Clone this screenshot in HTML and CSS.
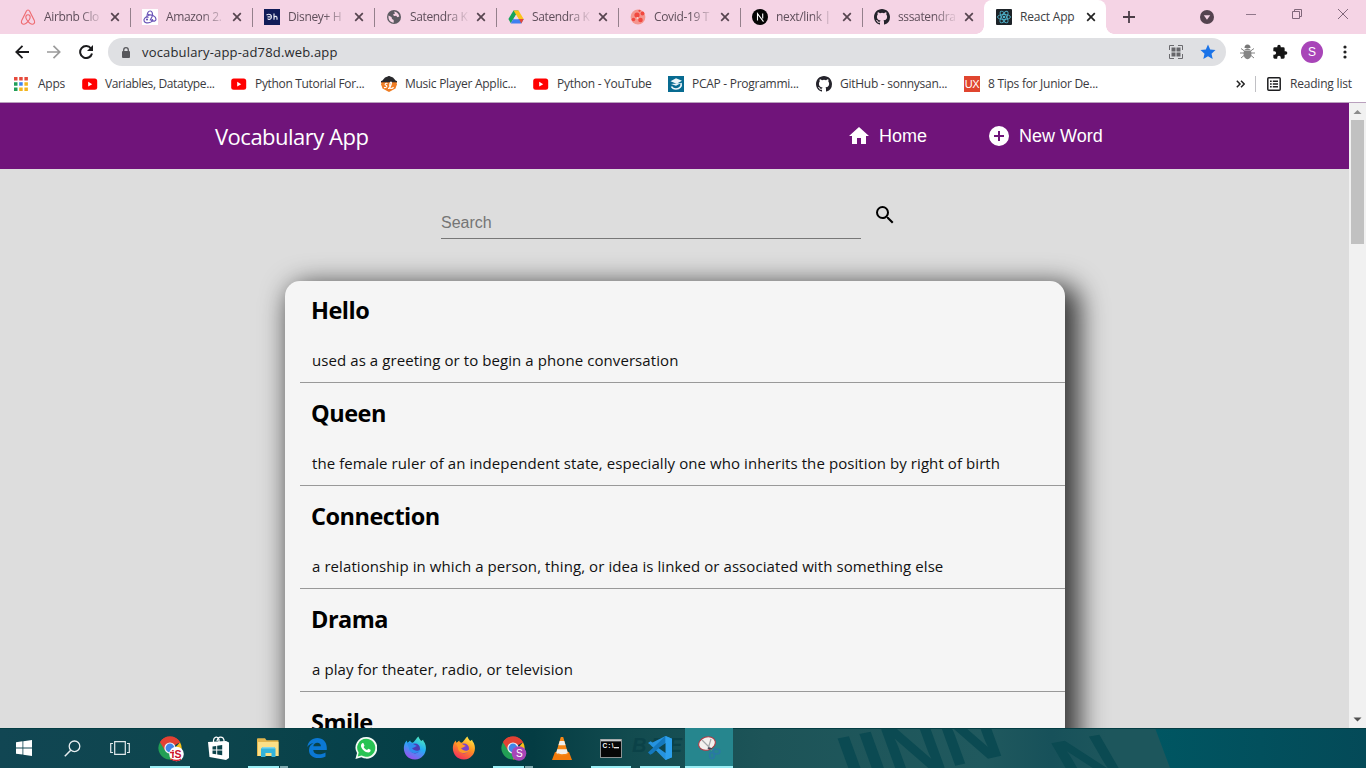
FILE: index.html
```html
<!DOCTYPE html>
<html lang="en">
<head>
<meta charset="utf-8">
<title>React App</title>
<link rel="stylesheet" href="styles.css">
</head>
<body>
<svg class="defs" width="0" height="0">
  <defs>
    <symbol id="x" viewBox="0 0 10 10"><path d="M1.2 1.2l7.6 7.6M8.8 1.2L1.2 8.8" stroke="currentColor" stroke-width="1.7" fill="none"/></symbol>
    <symbol id="github" viewBox="0 0 16 16"><path fill="#24232b" fill-rule="evenodd" d="M8 0C3.58 0 0 3.58 0 8c0 3.54 2.29 6.53 5.47 7.59.4.07.55-.17.55-.38 0-.19-.01-.82-.01-1.49-2.01.37-2.53-.49-2.69-.94-.09-.23-.48-.94-.82-1.13-.28-.15-.68-.52-.01-.53.63-.01 1.08.58 1.23.82.72 1.21 1.87.87 2.33.66.07-.52.28-.87.51-1.07-1.78-.2-3.64-.89-3.64-3.95 0-.87.31-1.59.82-2.15-.08-.2-.36-1.02.08-2.12 0 0 .67-.21 2.2.82a7.6 7.6 0 014 0c1.53-1.04 2.2-.82 2.2-.82.44 1.1.16 1.92.08 2.12.51.56.82 1.27.82 2.15 0 3.07-1.87 3.75-3.65 3.95.29.25.54.73.54 1.48 0 1.07-.01 1.93-.01 2.2 0 .21.15.46.55.38A8.01 8.01 0 0016 8c0-4.42-3.58-8-8-8z"/></symbol>
    <symbol id="youtube" viewBox="0 0 16 16"><rect x=".2" y="2.500" width="15" height="11.300" rx="2.500" fill="#f00"/><path d="M6.200 5.800v4.700l4-2.350z" fill="#fff"/></symbol>
    <symbol id="chrome" viewBox="0 0 24 24"><path d="M12 12L2 6.2A11.5 11.5 0 0 1 22 6.2z" fill="#e34133"/><path d="M2 6.2A11.5 11.5 0 0 0 12 23.5l5-8.7L12 12z" fill="#229f55"/><path d="M22 6.2A11.5 11.5 0 0 1 12 23.5L17 12z" fill="#fbc116"/><path d="M12 6.8h10.3l-.3-.6A11.5 11.5 0 0 0 2 6.2l5.2 8.6z" fill="#e34133"/><circle cx="12" cy="12" r="5.6" fill="#f1f3f4"/><circle cx="12" cy="12" r="4.4" fill="#4285e8"/></symbol>
    <linearGradient id="ffa" x1=".8" y1="0" x2=".3" y2="1"><stop offset="0" stop-color="#fff04a"/><stop offset=".45" stop-color="#ff9720"/><stop offset="1" stop-color="#f42d5e"/></linearGradient>
    <linearGradient id="ffb" x1=".8" y1="0" x2=".3" y2="1"><stop offset="0" stop-color="#54efb9"/><stop offset=".45" stop-color="#22aef4"/><stop offset="1" stop-color="#9c4df0"/></linearGradient>
    <symbol id="fox" viewBox="0 0 24 24"><path d="M15.500.5c.2 2 2 3 2.600 4.400l2-1.200c.2 1.500 1 2 1.800 3.500C25 14 21 23.500 12 23.500S-.8 14.500 1.500 8C2 6.600 3 5.500 3.800 4.500L4.400 7l2.800-2.500c.2 1.200.8 1.800 2 2.200 2.500-.2 3.600-4.500 6.300-6.200z"/></symbol>
  </defs>
</svg>

<header class="tabstrip">
  <div class="tab"><svg class="fav" viewBox="0 0 16 16" fill="none" stroke="#ee6a70" stroke-width="1.1"><path d="M8 1C6.900 1 6.600 1.700 6.100 2.700L1.700 11.400C.6 14 2.300 15.300 4 15.200c2.200-.2 6.200-4.500 6.200-7C10.200 6.700 9.300 5.800 8 5.800s-2.200.9-2.200 2.400c0 2.500 4 6.800 6.200 7 1.700.1 3.400-1.200 2.300-3.800L9.900 2.700C9.400 1.700 9.100 1 8 1z"/></svg><span class="t">Airbnb Clo</span><svg class="x"><use href="#x"/></svg></div>
  <div class="tab"><svg class="fav" viewBox="0 0 16 16"><rect width="16" height="16" fill="#fff"/><g fill="none" stroke="#6b55b8" stroke-width="1.2"><path d="M4.800 8.500C5 4.500 6.500 2 8.200 2c2 0 3 3 1.800 5.800L8 11.500"/><path d="M6.500 6c3-.8 7.500 1.200 7.500 4.200 0 2-2.500 2.600-4.500 1.300"/><path d="M11 11c-1 2-4 3.200-6.500 2.800C2 13.400 1.200 11 2.800 9.200 4 8 5.500 7.700 6.500 8.500"/></g><g fill="#6b55b8"><circle cx="6.500" cy="5.900" r="1.100"/><circle cx="5" cy="10.500" r="1.100"/><circle cx="10.200" cy="11.200" r="1.100"/></g></svg><span class="t">Amazon 2.</span><svg class="x"><use href="#x"/></svg></div>
  <div class="tab"><svg class="fav" viewBox="0 0 16 16"><rect width="16" height="16" fill="#101c58"/><path d="M2.500 6C6 4 8 6.500 7.300 8.800 6.800 10.500 4 11 3.800 9.500M3.500 7.800h3M10 4.500v6.200M10 8.200c1.500-1.500 3-1 3 .8v1.700" fill="none" stroke="#e7e9f2" stroke-width="1.200"/></svg><span class="t">Disney+ H</span><svg class="x"><use href="#x"/></svg></div>
  <div class="tab"><svg class="fav" viewBox="0 0 16 16"><circle cx="8" cy="8" r="7" fill="#5d5b62"/><path d="M2.500 6.500l3 1.500.5 2 1.700 1v2.700C4.500 13.500 2 11 2.500 6.500zM8 2.500c3 .2 5 2.500 5.300 5l-2 .8-1-1.500-2.300.2-1-1.500 2-1z" fill="#f5d4e5"/></svg><span class="t">Satendra K</span><svg class="x"><use href="#x"/></svg></div>
  <div class="tab"><svg class="fav" viewBox="0 0 16 16"><path d="M5.500 1.500h5l-7.700 12.700L.4 10.100z" fill="#17a45a"/><path d="M5.500 1.500h5l5.200 8.600h-5z" fill="#fbc31a"/><path d="M15.700 10.100l-2.400 4.300H2.700l2.600-4.300z" fill="#3f7ff0"/><path d="M8 6l2.500 4.200h-5z" fill="#f5d4e5"/><path d="M11 10.100h4.700l-2.400 4.300z" fill="#e5473a"/></svg><span class="t">Satendra K</span><svg class="x"><use href="#x"/></svg></div>
  <div class="tab"><svg class="fav" viewBox="0 0 16 16"><circle cx="8" cy="8" r="7.400" fill="#f4968f"/><g fill="#f1483f"><circle cx="7" cy="6" r="2.600"/><circle cx="12.500" cy="4.500" r="1.900"/><circle cx="10.500" cy="11" r="2.300"/><circle cx="3.500" cy="10.500" r="1.800"/><circle cx="9.500" cy="1.800" r="1.100"/></g><circle cx="7.500" cy="9" r="1" fill="#fbd0ca"/></svg><span class="t">Covid-19 T</span><svg class="x"><use href="#x"/></svg></div>
  <div class="tab"><svg class="fav" viewBox="0 0 16 16"><circle cx="8" cy="8" r="8" fill="#050505"/><path d="M5.500 11.500V4.700l6 8M10.700 4.500v5" stroke="#fff" stroke-width="1.100" fill="none"/></svg><span class="t">next/link | </span><svg class="x"><use href="#x"/></svg></div>
  <div class="tab last"><svg class="fav"><use href="#github"/></svg><span class="t">sssatendra</span><svg class="x"><use href="#x"/></svg></div>
  <div class="tab active"><svg class="fav" viewBox="0 0 16 16"><rect width="16" height="16" rx="1" fill="#1d2328"/><g fill="none" stroke="#4fb3cc" stroke-width=".9"><ellipse cx="8" cy="8" rx="6.500" ry="2.500"/><ellipse cx="8" cy="8" rx="6.500" ry="2.500" transform="rotate(60 8 8)"/><ellipse cx="8" cy="8" rx="6.500" ry="2.500" transform="rotate(120 8 8)"/></g><circle cx="8" cy="8" r="1.300" fill="#4fb3cc"/></svg><span class="t full">React App</span><svg class="x"><use href="#x"/></svg></div>
  <svg class="plus" viewBox="0 0 12 12"><path d="M6 0v12M0 6h12" stroke="#4b3d47" stroke-width="1.800"/></svg>
  <div class="winctl">
    <svg width="14" height="14" viewBox="0 0 14 14"><circle cx="7" cy="7" r="7" fill="#54434f"/><path d="M3.800 5.200h6.400L7 9.800z" fill="#f5d4e5"/></svg>
    <svg class="min" width="10" height="10" viewBox="0 0 10 10"><path d="M0 5.500h10" stroke="#90778a"/></svg>
    <svg class="max" width="10" height="10" viewBox="0 0 10 10"><path d="M.5 2.500h7v7h-7zM2.500 2.500v-2h7v7h-2" stroke="#80677a" fill="none"/></svg>
    <svg class="cls" width="10" height="10" viewBox="0 0 10 10"><path d="M0 0l10 10M10 0L0 10" stroke="#80677a"/></svg>
  </div>
</header>

<div class="toolbar">
  <div class="nav">
    <svg width="14" height="14" viewBox="0 0 14 14"><path d="M14 7H1.500M7.500.8L1.300 7l6.200 6.200" fill="none" stroke="#1b1b1d" stroke-width="1.800"/></svg>
    <svg width="14" height="14" viewBox="0 0 14 14"><path d="M0 7h12.500M6.500.8L12.700 7l-6.200 6.200" fill="none" stroke="#9b9b9b" stroke-width="1.700"/></svg>
    <svg width="14" height="14" viewBox="0 0 14 14"><path d="M12 3.500A6 6 0 1 0 13 8.500" fill="none" stroke="#1b1b1d" stroke-width="2"/><path d="M14 0v6H8z" fill="#1b1b1d"/></svg>
  </div>
  <div class="omni">
    <svg width="8" height="11" viewBox="0 0 8 11"><rect y="4" width="8" height="7" rx="1" fill="#58585c"/><path d="M1.700 4.500V3a2.300 2.300 0 0 1 4.600 0v1.500" fill="none" stroke="#58585c" stroke-width="1.300"/></svg>
    <span class="url">vocabulary-app-ad78d.web.app</span>
    <svg class="qr" width="14" height="14" viewBox="0 0 14 14"><path d="M.5 5V.5H5M9 .5h4.500V5M13.500 9v4.500H9M5 13.500H.5V9" fill="none" stroke="#6a6a6e"/><path d="M2.500 2.500h4v4h-4zM7.500 2.500h4v4h-4zM2.500 7.500h4v4h-4zM7.500 7.500h4v4h-4z" fill="#66666a"/></svg>
    <svg width="16" height="16" viewBox="0 0 16 16"><path d="M8 .6l2.200 5 5.300.5-4 3.600 1.200 5.300L8 12.200 3.300 15l1.200-5.300-4-3.600 5.300-.5z" fill="#1a73e8"/></svg>
  </div>
  <svg class="bug" width="15" height="16" viewBox="0 0 15 16"><path d="M1 4.500l3 2.200M0 9h4M1 14l3-2.500M14 4.500l-3 2.200M15 9h-4M14 14l-3-2.500" stroke="#838383" stroke-width="1"/><path d="M4.500 4A3 3.500 0 0 1 10.500 4z" fill="#777"/><ellipse cx="7.500" cy="9.700" rx="4" ry="5.500" fill="#858585"/><path d="M4 6.500h7" stroke="#bbb"/></svg>
  <svg class="puz" width="16" height="16" viewBox="0 0 24 24"><path fill="#151515" d="M20.500 11H19V7a2 2 0 0 0-2-2h-4V3.500a2.500 2.500 0 0 0-5 0V5H4a2 2 0 0 0-2 2v3.800h1.500a2.700 2.700 0 0 1 0 5.400H2V20c0 1.100.9 2 2 2h3.800v-1.500a2.700 2.700 0 0 1 5.400 0V22H17a2 2 0 0 0 2-2v-4h1.500a2.500 2.500 0 0 0 0-5z"/></svg>
  <span class="avatar">S</span>
  <svg class="dots" width="4" height="14" viewBox="0 0 4 14"><g fill="#222"><circle cx="2" cy="2" r="1.600"/><circle cx="2" cy="7" r="1.600"/><circle cx="2" cy="12" r="1.600"/></g></svg>
</div>

<div class="bookmarks">
  <div class="bm b1"><svg viewBox="0 0 16 16"><path d="M1 1h3.500v3.500H1zM6.200 1h3.500v3.500H6.200zM11.400 1h3.500v3.500h-3.500z" fill="#e64a3c"/><path d="M1 6.200h3.500v3.500H1zM1 11.400h3.500v3.500H1z" fill="#209e58"/><path d="M6.200 6.200h3.500v3.500H6.200z" fill="#3f84f0"/><path d="M11.400 6.200h3.500v3.500h-3.500zM6.200 11.400h3.500v3.500H6.200zM11.400 11.400h3.500v3.500h-3.500z" fill="#f3b51e"/></svg><span>Apps</span></div>
  <div class="bm b2"><svg><use href="#youtube"/></svg><span>Variables, Datatype...</span></div>
  <div class="bm b3"><svg><use href="#youtube"/></svg><span>Python Tutorial For...</span></div>
  <div class="bm b4"><svg viewBox="0 0 16 16"><path d="M1 5.500L8 0l7 5.500z" fill="#29292c"/><path d="M0 6h16a8 8 0 0 1-16 0z" fill="#ef7d24"/><path d="M1 5L4 1.500 8 0l4 1.500L15 5z" fill="#29292c"/><path d="M0 8h16l-1.500 4.500L8 16l-6.500-3.500z" fill="#ef7d24"/><path d="M0 5.600h16" stroke="#29292c" stroke-width="1.400"/><path d="M6.500 7.500C4 6.500 3.500 8.900 5 9.300s1 2.700-2 2.200M7 12.500c2.500 0 4.300-6.500 3-6.500s-2 6.500 0 6.500 2.500-1.500 2.500-1.500" fill="none" stroke="#fff" stroke-width="1.100"/></svg><span>Music Player Applic...</span></div>
  <div class="bm b5"><svg><use href="#youtube"/></svg><span>Python - YouTube</span></div>
  <div class="bm b6"><svg viewBox="0 0 16 16"><rect width="16" height="16" fill="#086b91"/><path d="M2.500 5.200L8 2.200l6 2.600-5.500 3zM3 8l5 1.800L13 7" fill="#eef7fa"/><path d="M13 7c1 3.500-1.500 6-5 6-2.300 0-3.800-1-4.500-2.500" fill="none" stroke="#eef7fa" stroke-width="1.600"/></svg><span>PCAP - Programmi...</span></div>
  <div class="bm b7"><svg><use href="#github"/></svg><span>GitHub - sonnysan...</span></div>
  <div class="bm b8"><i class="ux">UX</i><span>8 Tips for Junior De...</span></div>
  <svg class="more" width="9" height="8" viewBox="0 0 9 8"><path d="M.8.8L4 4 .8 7.200M5 .8L8.200 4 5 7.200" fill="none" stroke="#222" stroke-width="1.500"/></svg>
  <div class="rl"><svg width="14" height="14" viewBox="0 0 14 14"><rect x=".8" y=".8" width="12.400" height="12.400" rx="1" fill="none" stroke="#1d1d1f" stroke-width="1.500"/><path d="M3 4.200h1.700M5.800 4.200H11M3 7h1.700M5.800 7H11M3 9.800h1.700M5.800 9.800H11" stroke="#1d1d1f" stroke-width="1.400"/></svg><span>Reading list</span></div>
</div>

<div class="viewport">
  <main class="page">
    <nav class="appbar">
      <span class="brand">Vocabulary App</span>
      <a class="link home"><svg width="24" height="24" viewBox="0 0 24 24"><path d="M10 20v-6h4v6h5v-8h3L12 3 2 12h3v8z" fill="#fff"/></svg>Home</a>
      <a class="link"><svg width="24" height="24" viewBox="0 0 24 24"><path d="M12 2a10 10 0 1 0 0 20 10 10 0 0 0 0-20zm5 11h-4v4h-2v-4H7v-2h4V7h2v4h4v2z" fill="#fff"/></svg>New Word</a>
    </nav>
    <div class="search">
      <div class="field">Search</div>
      <svg width="24" height="24" viewBox="0 0 24 24"><path d="M15.500 14h-.79l-.28-.27A6.471 6.471 0 0 0 16 9.500 6.500 6.500 0 1 0 9.500 16c1.610 0 3.090-.59 4.230-1.570l.27.280v.79l5 4.990L20.490 19l-4.990-5zm-6 0C7.010 14 5 11.990 5 9.500S7.010 5 9.500 5 14 7.010 14 9.500 11.990 14 9.500 14z"/></svg>
    </div>
    <section class="card">
      <article class="word"><h2>Hello</h2><p>used as a greeting or to begin a phone conversation</p></article>
      <article class="word"><h2>Queen</h2><p>the female ruler of an independent state, especially one who inherits the position by right of birth</p></article>
      <article class="word"><h2>Connection</h2><p>a relationship in which a person, thing, or idea is linked or associated with something else</p></article>
      <article class="word"><h2>Drama</h2><p>a play for theater, radio, or television</p></article>
      <article class="word"><h2>Smile</h2></article>
    </section>
  </main>
  <div class="scroll">
    <svg width="17" height="17" viewBox="0 0 17 17"><path d="M4.500 11L8.500 7l4 4z" fill="#8b8b8b"/></svg>
    <div class="thumb"></div>
    <svg class="down" width="17" height="17" viewBox="0 0 17 17"><path d="M4.500 6.500h8l-4 4z" fill="#505050"/></svg>
  </div>
</div>

<footer class="taskbar">
  <svg class="wall" width="1366" height="40" viewBox="0 0 1366 40">
    <defs><linearGradient id="w" x1="0" x2="1"><stop offset="0" stop-color="#114653"/><stop offset=".15" stop-color="#0d454d"/><stop offset=".3" stop-color="#053f47"/><stop offset=".39" stop-color="#043c43"/><stop offset=".46" stop-color="#124b4f"/><stop offset=".56" stop-color="#1d5458"/><stop offset=".72" stop-color="#20595e"/><stop offset=".77" stop-color="#17515a"/><stop offset=".81" stop-color="#1d565c"/></linearGradient>
    <linearGradient id="w2" x1="0" x2="1"><stop offset="0" stop-color="#005662"/><stop offset="1" stop-color="#044a58"/></linearGradient></defs>
    <rect width="1366" height="40" fill="url(#w)"/>
    <path d="M1155 0h211v40h-196z" fill="url(#w2)"/>
    <g fill="#0b4a52" font-family="Liberation Sans" font-weight="bold">
      <text x="632" y="24" font-size="20" fill="#0b4248" font-style="italic" textLength="68">BEEE</text>
      <text transform="translate(850 60) rotate(-12) skewX(8)" font-size="74" textLength="160" lengthAdjust="spacingAndGlyphs">IINN</text>
      <text transform="translate(1070 58) rotate(-10) skewX(20)" font-size="66" textLength="60" lengthAdjust="spacingAndGlyphs">N</text>
    </g>
    <path d="M0 .5h1366" stroke="#043d43"/>
  </svg>
  <div class="cell"><svg width="16" height="16" viewBox="0 0 16 16"><path d="M0 2.200L6.500 1.300v6.200H0zM7.300 1.200L16 0v7.500H7.300zM0 8.400h6.500v6.200L0 13.700zM7.300 8.400H16V16l-8.700-1.200z" fill="#fff"/></svg></div>
  <div class="cell"><svg width="17" height="17" viewBox="0 0 17 17"><circle cx="10.500" cy="6.300" r="5.300" fill="none" stroke="#e8eef0" stroke-width="1.300"/><path d="M6.700 10.200L.8 16.200" stroke="#e8eef0" stroke-width="1.500"/></svg></div>
  <div class="cell"><svg width="20" height="14" viewBox="0 0 20 14"><path d="M4.700.7h10.600v12.600H4.700zM3 2.500H.7v9H3M17 2.500h2.300v9H17" fill="none" stroke="#e0e8ea" stroke-width="1.200"/></svg></div>
  <div class="cell app first run"><svg class="low" width="26" height="26" viewBox="0 0 26 26"><use href="#chrome" x="0" y="0" width="24" height="24"/><circle cx="18.500" cy="18" r="7.300" fill="#fff"/><path d="M12 16.500h4M13 23c3 2 8 2 10 0" stroke="#d6202f" stroke-width="1.300" fill="none"/><text x="13.500" y="21.800" font-family="Liberation Sans" font-weight="bold" font-size="10.500" fill="#c9102d">iS</text></svg></div>
  <div class="cell app"><svg width="22" height="24" viewBox="0 0 22 24"><path d="M5.500 7V4.500C6 .5 10 0 11 3.500V7M9 5C10 0 15 0 16 4v3" fill="none" stroke="#fff" stroke-width="1.200"/><path d="M0 6l18-1 3 1.500V22L18 24 1.500 21z" fill="#fff"/><path d="M4.500 10.500l3.700-.6v3.700H4.500zM9.200 9.700l5-.8v4.700h-5zM4.500 14.600h3.700v3.700l-3.700-.6zM9.200 14.600h5v4.700l-5-.8z" fill="#0b434a"/></svg></div>
  <div class="cell app run split"><svg width="22" height="20" viewBox="0 0 22 20"><path d="M0 1.500C0 .7.500.3 1 .3h7l1.500 2H21.500V18H0z" fill="#e3b64e"/><path d="M1 4h20.500v14H1z" fill="#fbdf86"/><path d="M4 19V10.500L6 9h11l1.500 1.500V19h-4v-4h-6v4z" fill="#32b4dc"/><path d="M4 10.500L6 9h11l1.500 1.500z" fill="#7fd6ec"/></svg></div>
  <div class="cell app"><svg width="20" height="20" viewBox="0 0 20 20"><path d="M.3 9C1 3.500 5 0 10.300 0 16 0 19.800 4 19.800 9.800v2.100H6.300c.2 3 2.600 4.300 5.900 4.300 2.300 0 4.400-.6 6.300-1.800v4c-2 1.100-4.400 1.600-7.200 1.600C5.500 20 2 16.800 2 12.200c0-3.500 1.800-6 4.600-7.300C3.800 5.400 1.700 6.700.3 9zm6-.7h7.600C13.800 6 12.600 4.700 10.300 4.700c-2.200 0-3.600 1.300-4 3.600z" fill="#0b78d4"/></svg></div>
  <div class="cell app"><svg width="22" height="22" viewBox="0 0 24 24"><path d="M12.200 0A11.600 11.600 0 0 0 2.200 17.500L.5 24l6.500-1.800A11.800 11.800 0 1 0 12.200 0z" fill="#f4faf6"/><path d="M12.200 2A9.700 9.700 0 0 0 4 17l-1 4.200 4.300-1A9.800 9.800 0 1 0 12.200 2z" fill="#28c354"/><path d="M8.500 6.500c.6 0 .7.100 1 .8l.8 1.900c.2.500-.7 1.300-.9 1.700.8 1.500 2 2.600 3.700 3.300.4 0 1-1.200 1.400-1.300.4 0 2.300 1 2.500 1.200.3 1.300-.8 2.500-2.400 2.800-3.500 0-8-4.200-8.100-7.400 0-1.500 1-2.800 2-3z" fill="#fff"/></svg></div>
  <div class="cell app"><svg width="24" height="24" viewBox="0 0 24 24"><use href="#fox" fill="url(#ffb)"/><circle cx="12" cy="12.500" r="5" fill="#4a3cb5"/><path d="M4 7c2-1 5 0 7 1.500L14 10c-2 .5-3 2-5 2 2 3 6 4 9 1-1 5-12 6-12-1z" fill="#2f8df0"/></svg></div>
  <div class="cell app"><svg width="24" height="24" viewBox="0 0 24 24"><use href="#fox" fill="url(#ffa)"/><circle cx="12" cy="12.500" r="5" fill="#7a42cb"/><path d="M4 7c2-1 5 0 7 1.500L14 10c-2 .5-3 2-5 2 2 3 6 4 9 1-1 5-12 6-12-1z" fill="#ff9a28"/></svg></div>
  <div class="cell app run split"><svg class="low" width="26" height="26" viewBox="0 0 26 26"><use href="#chrome" x="0" y="0" width="24" height="24"/><circle cx="18" cy="17.500" r="7.300" fill="#a845b8"/><text x="15" y="21.200" font-family="Liberation Sans" font-size="10" fill="#fff">S</text></svg></div>
  <div class="cell app"><svg width="20" height="23" viewBox="0 0 20 23"><path d="M3 15h14l3 8H0z" fill="#f47b0b"/><path d="M8.800 0h2.400l5 17c-2 2-10.400 2-12.400 0z" fill="#f58717"/><path d="M7.700 4h4.600l1.300 4.300H6.400zM5.200 12.300h9.600l1 3.700c-2 1.600-9.600 1.600-11.600 0z" fill="#f1efeb"/></svg></div>
  <div class="cell app run"><svg width="22" height="19" viewBox="0 0 22 19"><rect width="22" height="19" fill="#8d9394"/><rect x="1" y="2.500" width="20" height="15.500" fill="#060606"/><path d="M1 1.200h20" stroke="#e4e4e4"/><text x="2.500" y="9" font-family="Liberation Sans" font-weight="bold" font-size="6.500" fill="#fff" textLength="11">C:\</text><path d="M14 8.700h5" stroke="#fff" stroke-width="1.200"/></svg></div>
  <div class="cell app run"><svg width="24" height="24" viewBox="0 0 24 24"><path d="M17.500 0L24 2.800v18.400L17.500 24 2 8.500 0 7l2.500-1.700 2 1.100z" fill="#2693df"/><path d="M17.500 0v6.500L4.500 17.600 2.300 18.800 0 16.500z" fill="#1478bd"/><path d="M17.500 24L24 21.200V2.800L17.500 0z" fill="#2ca0ed"/><path d="M17.500 7v10L10.500 12z" fill="#0e454f"/></svg></div>
  <div class="cell app run sel"><svg width="24" height="24" viewBox="0 0 24 24"><ellipse cx="10" cy="7.500" rx="8.500" ry="6.500" transform="rotate(-18 10 7.500)" fill="#f4f1ef" stroke="#b03a45" stroke-width="1.100"/><path d="M5 4l10 10M14 3l-3 10" stroke="#a5a7aa" stroke-width="1.200"/><path d="M11 12l4 1" stroke="#445" stroke-width="1.800"/><g fill="none" stroke="#2a78a4" stroke-width="1.600"><ellipse cx="19.500" cy="15.500" rx="3.300" ry="2.500"/><ellipse cx="15" cy="19.500" rx="2.300" ry="3"/></g></svg></div>
</footer>
</body>
</html>
```
FILE: styles.css
```css
* { box-sizing: border-box; }
body {
  margin: 0;
  width: 1366px;
  height: 768px;
  overflow: hidden;
  display: flex;
  flex-direction: column;
  font-family: "Open Sans", "Noto Sans", sans-serif;
  font-size: 12px;
  background: #fff;
}
svg { display: block; flex: none; }
.defs { position: absolute; }

/* Tab strip */
.tabstrip {
  height: 34px;
  flex: none;
  display: flex;
  padding-left: 8px;
  background: #f5d4e5;
}
.tab {
  width: 122px;
  height: 34px;
  flex: none;
  display: flex;
  align-items: center;
  padding-left: 12px;
  color: #5f4f5b;
  background: linear-gradient(#94808c, #94808c) right 0 top 8px / 1px 19px no-repeat;
  transform: translateX(1px);
}
.tab.last, .tab.active { background-image: none; }
.tab:first-child .fav { margin-left: -1px; }
.fav { width: 16px; height: 16px; margin-left: -1px; }
.t {
  width: 58px;
  margin-left: 8px;
  white-space: nowrap;
  line-height: 18px;
  letter-spacing: -.35px;
  -webkit-mask-image: linear-gradient(90deg, #000 62%, transparent 104%);
  mask-image: linear-gradient(90deg, #000 62%, transparent 104%);
}
.t.full { -webkit-mask-image: none; mask-image: none; letter-spacing: -.2px; }
.x { width: 10px; height: 10px; margin-left: 8px; color: #56444f; }
.tab.active {
  background: #fff;
  border-radius: 8px 8px 0 0;
  color: #3c4043;
  transform: none;
  padding-left: 13px;
  position: relative;
}
.tab.active .x { color: #222; }
.tab.active::before, .tab.active::after {
  content: "";
  position: absolute;
  bottom: 0;
  width: 8px;
  height: 8px;
}
.tab.active::before { left: -8px; background: radial-gradient(circle at 0 0, transparent 7.5px, #fff 8px); }
.tab.active::after { right: -8px; background: radial-gradient(circle at 100% 0, transparent 7.5px, #fff 8px); }
.plus { width: 12px; height: 12px; margin: 11px 0 0 17px; }
.winctl { display: flex; margin: 10px 0 0 65px; height: 14px; }
.winctl .min { margin: -1px 0 0 32px; }
.winctl .max { margin: -1px 0 0 36px; }
.winctl .cls { margin: -1px 0 0 36px; }

/* Toolbar */
.toolbar { height: 36px; flex: none; display: flex; align-items: center; }
.nav { display: flex; gap: 18px; width: 108px; padding-left: 15px; }
.omni {
  width: 1118px;
  height: 28px;
  border-radius: 14px;
  background: #dfe0e3;
  display: flex;
  align-items: center;
  padding-left: 14px;
}
.url { flex: 1; margin-left: 12px; font-size: 13px; letter-spacing: .17px; color: #28292c; line-height: 18px; }
.qr { margin-right: 17px; }
.omni > svg:last-child { margin-right: 10px; }
.bug { margin-left: 14px; }
.puz { margin-left: 17px; }
.avatar {
  width: 22px;
  height: 22px;
  margin-left: 13px;
  border-radius: 50%;
  background: #a845b8;
  color: #fff;
  font: 12px/22px "Liberation Sans", sans-serif;
  text-align: center;
}
.dots { margin-left: 20px; }

/* Bookmarks */
.bookmarks {
  height: 33px;
  flex: none;
  display: flex;
  align-items: center;
  padding: 0 0 4px 13px;
  border-bottom: 1px solid #b9a0bd;
  color: #3a3a3e;
  white-space: nowrap;
  letter-spacing: -.27px;
}
.bm { display: flex; align-items: center; gap: 8px; flex: none; }
.bm svg { width: 16px; height: 16px; }
.bm span, .rl span { line-height: 18px; }
.b1 { width: 69px; gap: 9px; }
.b2 { width: 149px; gap: 7px; letter-spacing: -.37px; }
.b3 { width: 150px; letter-spacing: -.33px; }
.b4 { width: 152px; }
.b5 { width: 135px; }
.b6 { width: 148px; }
.b7 { width: 148px; }
.b8 { width: 272px; }
.ux {
  width: 16px;
  height: 16px;
  background: #e0452f;
  color: #fff;
  font: 11px/16px "Liberation Sans", sans-serif;
  text-align: center;
}
.rl { display: flex; align-items: center; gap: 9px; margin-left: 10px; padding-left: 11px; height: 16px; border-left: 1px solid #c0c0c4; letter-spacing: -.2px; }

/* Page */
.viewport { height: 625px; flex: none; display: flex; overflow: hidden; }
.page { width: 1349px; background: #ddd; overflow: hidden; }
.appbar {
  height: 66px;
  background: #70147a;
  display: flex;
  align-items: center;
  padding-left: 215px;
  color: #fff;
}
.brand { width: 632px; font-size: 22px; line-height: 30px; letter-spacing: -.5px; }
.link { display: flex; align-items: center; font: 18px/24px "Liberation Sans", Arial, sans-serif; gap: 8px; }
.home { width: 140px; }
.search { display: flex; padding: 34px 0 0 441px; height: 112px; }
.field {
  width: 420px;
  height: 36px;
  padding-top: 2px;
  border-bottom: 1px solid #777;
  color: #757575;
  font: 16px/36px "Liberation Sans", Arial, sans-serif;
}
.search svg { margin-left: 12px; }
.card {
  width: 780px;
  height: 700px;
  margin-left: 285px;
  padding-left: 15px;
  border-radius: 15px;
  background: #f5f5f5;
  box-shadow: 9px 9px 27px 6px rgba(0, 0, 0, .74);
}
.word { height: 103px; padding: 13px 0 0 12px; border-bottom: 1px solid #999; }
.word:first-child { height: 102px; padding-top: 12px; }
h2 { margin: 0 0 0 -1px; font-size: 23.5px; line-height: 34px; letter-spacing: -.5px; color: #000; }
p { margin: 21px 0 0; font-size: 15px; line-height: 24px; letter-spacing: .08px; color: #111; white-space: nowrap; }
.scroll { width: 17px; background: #f1f1f1; display: flex; flex-direction: column; }
.thumb { width: 13px; height: 124px; margin-left: 2px; background: #c1c1c1; }
.down { margin-top: auto; }

/* Taskbar */
.taskbar { height: 40px; flex: none; display: flex; position: relative; overflow: hidden; }
.wall { position: absolute; left: 0; top: 0; }
.cell { width: 48px; height: 40px; flex: none; display: flex; align-items: center; justify-content: center; position: relative; }
.app { margin-right: 1px; }
.first { margin-left: 2px; }
.low { margin: 2px 0 0 2px; }
.run { background: linear-gradient(#9aeef5, #9aeef5) 4px 38px / 40px 2px no-repeat; }
.split { background: linear-gradient(90deg, #9aeef5 31px, #0a454c 31px 32px, #7eaab0 32px) 4px 38px / 40px 2px no-repeat; }
.sel { background: linear-gradient(#9aeef5, #9aeef5) 0 38px / 48px 2px no-repeat #26868e; }
```
